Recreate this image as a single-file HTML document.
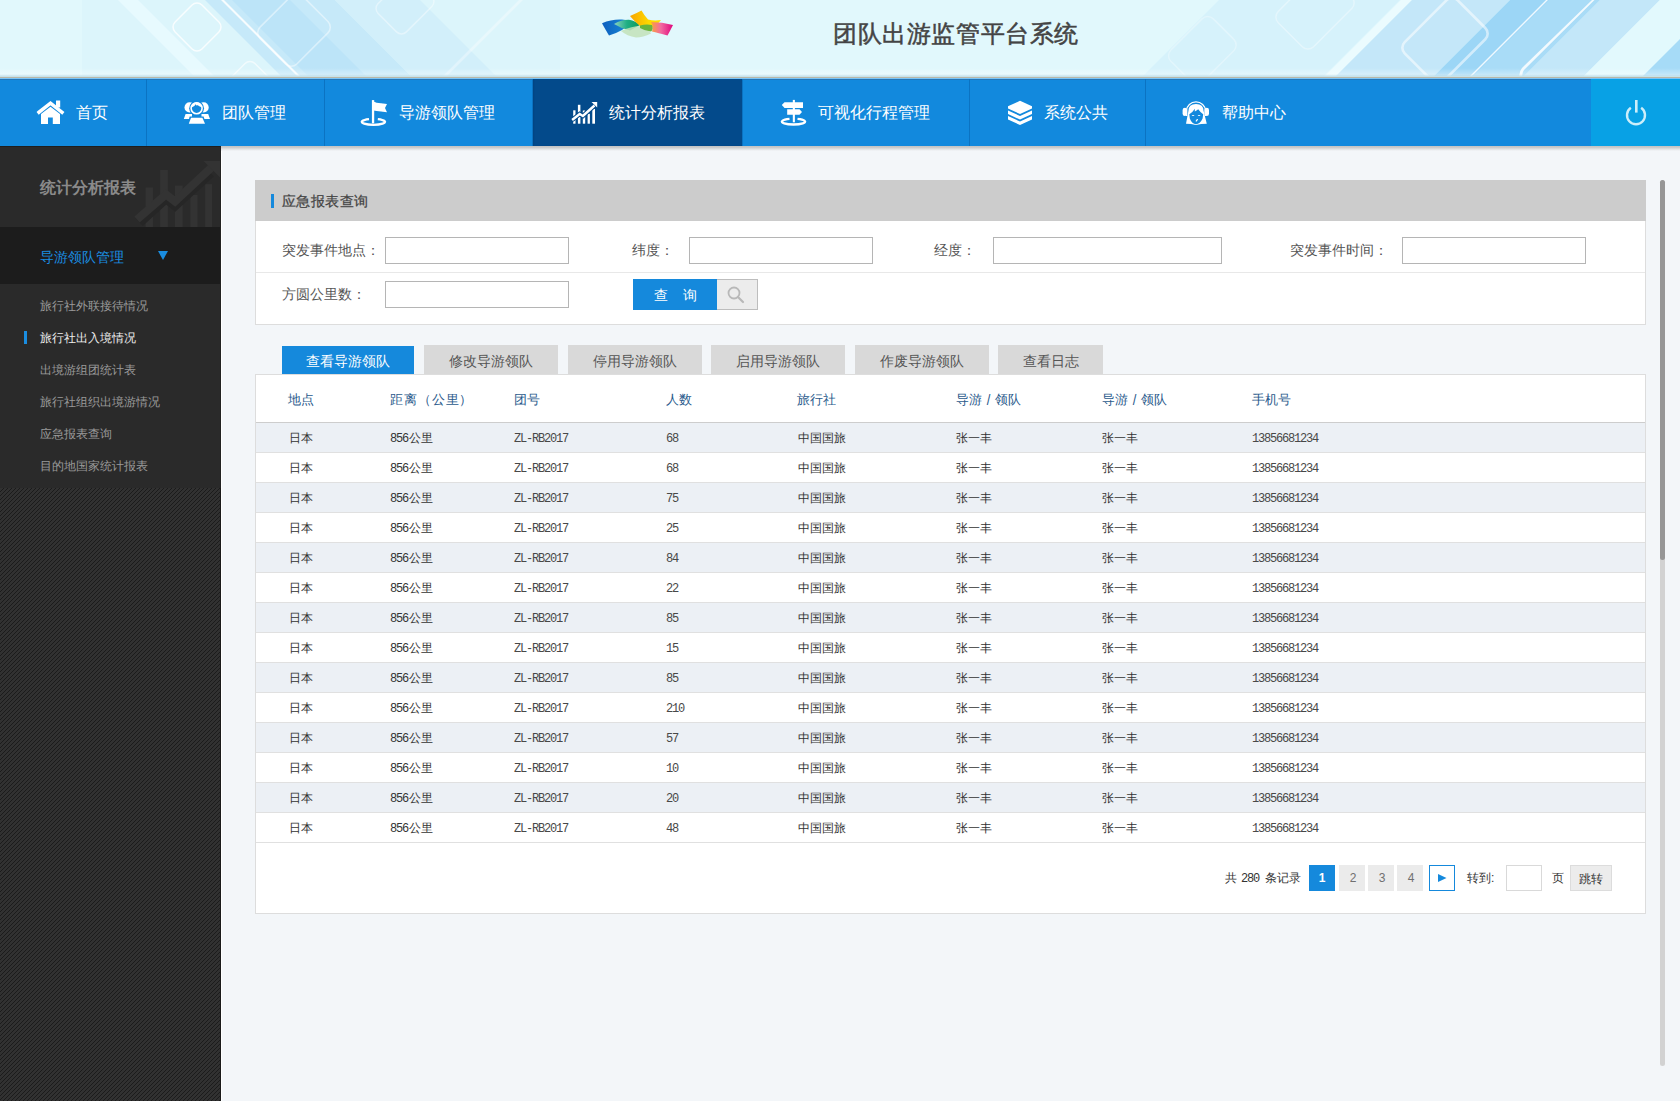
<!DOCTYPE html><html><head><meta charset="utf-8"><style>
*{margin:0;padding:0;box-sizing:border-box}
html,body{width:1680px;height:1101px;overflow:hidden;background:#f3f6f9;font-family:"Liberation Sans",sans-serif;color:#333}
#hdr{position:absolute;left:0;top:0;width:1680px;height:79px;background:#e0f8fc;overflow:hidden}
#title{position:absolute;left:833px;top:17px;font-size:24.4px;color:#444;line-height:34px;white-space:nowrap;-webkit-text-stroke:0.5px #444;letter-spacing:0.6px}
#nav{position:absolute;left:0;top:79px;width:1680px;height:67px;background:#1289dd;border-top:1px solid #2476b8}
.ni{position:absolute;top:-1px;height:67px;color:#fff;font-size:16px}
.ni .sep{position:absolute;left:0;top:0;width:1px;height:67px;background:#0b73c2}
.ni span{position:absolute;top:22px;line-height:24px;white-space:nowrap}
#navsvg{position:absolute;left:0;top:0}
#side{position:absolute;left:0;top:146px;width:221px;height:955px;background:#2a2a2a;overflow:hidden}
#side .t1{position:absolute;left:40px;top:31px;font-size:16px;font-weight:bold;color:#8a8a8a;line-height:22px;white-space:nowrap}
#side .sec{position:absolute;left:0;top:81px;width:221px;height:57px;background:#1c1c1c}
#side .sec span{position:absolute;left:40px;top:19px;font-size:14px;color:#1a8de0;line-height:22px;white-space:nowrap}
#side .it{position:absolute;left:40px;font-size:12px;color:#9a9a9a;line-height:18px;white-space:nowrap}
#side .it.on{color:#eeeeee}
#side .stripes{position:absolute;left:0;top:342px;width:221px;height:620px}
#content{position:absolute;left:221px;top:146px;width:1459px;height:955px;background:#f3f6f9;border-left:1px solid #fff}
.panel{position:absolute;left:255px;top:180px;width:1391px;height:145px;background:#fff;border:1px solid #dddddd;border-top:none}
.ph{position:absolute;left:255px;top:180px;width:1391px;height:41px;background:#cccccc}
.ph .bar{position:absolute;left:16px;top:14px;width:3px;height:14px;background:#1589dc}
.ph span{position:absolute;left:27px;top:10px;font-size:14px;color:#444;line-height:22px;-webkit-text-stroke:0.25px #444;letter-spacing:0.4px;white-space:nowrap}
.lbl{position:absolute;font-size:14px;color:#555;line-height:20px;white-space:nowrap}
.inp{position:absolute;height:27px;border:1px solid #b5b5b5;background:#fff}
.hline{position:absolute;left:256px;top:272px;width:1389px;height:1px;background:#e8e8e8}
.btn{position:absolute;left:633px;top:279px;width:125px;height:31px;border:1px solid #bdbdbd;background:#ececec}
.btn .b{position:absolute;left:-1px;top:-1px;width:84px;height:31px;background:#1589dc;color:#fff;font-size:14px;line-height:29px;text-align:center;letter-spacing:0}
.tab{position:absolute;top:345px;width:134px;height:29px;background:#d9d9d9;color:#555;font-size:14px;line-height:32px;text-align:center;white-space:nowrap}
.tab.on{top:346px;height:28px;width:132px;background:#1589dc;color:#fff;line-height:30px}
.tbl{position:absolute;left:255px;top:374px;width:1391px;height:540px;background:#fff;border:1px solid #dddddd}
.th{position:absolute;top:391px;font-size:13px;color:#2a5a8c;line-height:18px;white-space:nowrap}
.row{position:absolute;left:256px;width:1389px;height:30px;border-bottom:1px solid #e0e0e0}
.row.odd{background:#ecf0f5}
.row div{position:absolute;top:7px;font-size:12px;line-height:16px;color:#333;white-space:nowrap}
.row .m{top:8px;font-family:"Liberation Mono",monospace;font-size:12px;letter-spacing:-1.2px;color:#484848}
.pg{position:absolute;top:865px;height:26px;font-size:12px;line-height:26px;text-align:center}
</style></head><body><div id="hdr"><svg width="1680" height="79" viewBox="0 0 1680 79" style="position:absolute;left:0;top:0"><rect width="1680" height="79" fill="#e1f8fc"/><path d="M82 0 L560 0 L560 79 L82 79 Z" fill="#dcf5fb"/><path d="M118 0 L138 0 L217 79 L197 79 Z" fill="#e8fbfe" opacity="0.9"/><path d="M205 0 L335 0 L414 79 L284 79 Z" fill="#c6e9f9"/><path d="M232 0 L290 0 L369 79 L311 79 Z" fill="#bce4f8"/><path d="M335 0 L420 0 L499 79 L414 79 Z" fill="#d2effa"/><path d="M221 0 L224 0 L303 79 L300 79 Z" fill="#ffffff" opacity="0.85"/><rect x="178" y="8" width="38" height="38" rx="7" transform="rotate(45 197 27)" fill="none" stroke="#fff" stroke-width="1.5" opacity="0.8"/><rect x="268" y="0" width="52" height="60" rx="8" transform="rotate(45 294 30)" fill="none" stroke="#fff" stroke-width="1.6" opacity="0.45"/><rect x="232" y="66" width="36" height="36" rx="7" transform="rotate(45 250 84)" fill="none" stroke="#fff" stroke-width="1.6" opacity="0.6"/><rect x="385" y="-20" width="40" height="50" rx="7" transform="rotate(45 405 5)" fill="none" stroke="#fff" stroke-width="1.5" opacity="0.4"/><path d="M440 79 L519 0 L523 0 L444 79 Z" fill="#fff" opacity="0.35"/><path d="M1140 79 L1219 0 L1400 0 L1321 79 Z" fill="#d6f2fb"/><path d="M1322 79 L1401 0 L1412 0 L1333 79 Z" fill="#ecfbfe" opacity="0.9"/><path d="M1333 79 L1412 0 L1510 0 L1431 79 Z" fill="#c4e7f9"/><path d="M1431 79 L1510 0 L1600 0 L1521 79 Z" fill="#9cd6f6"/><path d="M1470 79 L1549 0 L1600 0 L1521 79 Z" fill="#a9dcf7"/><path d="M1521 79 L1600 0 L1660 0 L1581 79 Z" fill="#c3e7f9"/><path d="M1581 79 L1660 0 L1680 0 L1680 79 Z" fill="#e2f9fd"/><path d="M1640 79 L1680 39 L1680 79 Z" fill="#a6dbf7"/><path d="M1467 79 L1546 0 L1548 0 L1469 79 Z" fill="#fff" opacity="0.85"/><path d="M1592 0 L1594.5 0 L1524 70 Q1521 74 1523 79 L1520 79 Q1518 73 1522 68 Z" fill="#fff" opacity="0.85"/><rect x="1418" y="3" width="55" height="75" rx="8" transform="rotate(45 1445 40)" fill="none" stroke="#fff" stroke-width="2.6" opacity="0.55"/><rect x="1290" y="-25" width="50" height="70" rx="8" transform="rotate(45 1315 10)" fill="none" stroke="#fff" stroke-width="1.5" opacity="0.35"/><rect x="1180" y="20" width="45" height="60" rx="8" transform="rotate(45 1202 50)" fill="none" stroke="#fff" stroke-width="1.5" opacity="0.3"/><defs><linearGradient id="hb" x1="0" y1="0" x2="0" y2="1"><stop offset="0" stop-color="#fff" stop-opacity="0"/><stop offset="0.7" stop-color="#fff" stop-opacity="0.28"/><stop offset="1" stop-color="#c0dfea" stop-opacity="0.8"/></linearGradient></defs><rect x="0" y="68" width="1680" height="8" fill="url(#hb)"/><rect x="0" y="76" width="1680" height="1" fill="#c9e3ea"/><rect x="0" y="77" width="1680" height="1" fill="#b9b7a8"/><rect x="0" y="78" width="1680" height="1" fill="#7cc4f4"/><defs><linearGradient id="lgb" x1="0" y1="0" x2="1" y2="0"><stop offset="0" stop-color="#0d5fbf"/><stop offset="1" stop-color="#1a8fd8"/></linearGradient><linearGradient id="lgg" x1="0" y1="0" x2="1" y2="0"><stop offset="0" stop-color="#8fd3c0"/><stop offset="0.5" stop-color="#1fae84"/><stop offset="1" stop-color="#0e9a5a"/></linearGradient><linearGradient id="lgy" x1="0" y1="0" x2="1" y2="0"><stop offset="0" stop-color="#f7a500"/><stop offset="0.6" stop-color="#ffd800"/><stop offset="1" stop-color="#fbe000"/></linearGradient><linearGradient id="lgp" x1="0" y1="0" x2="1" y2="0"><stop offset="0" stop-color="#f9a23a"/><stop offset="0.45" stop-color="#f26aa0"/><stop offset="1" stop-color="#e0067d"/></linearGradient></defs><path d="M602 23.3 Q612 19 622 19.6 Q628 20 632 22 L622 30 Q615 34 609 35.5 Q605 29 602 23.3 Z" fill="url(#lgb)"/><path d="M614 24 Q622 19.5 629 19.8 Q636 21 640 25 L630 30.5 Q622 29 614 24 Z" fill="url(#lgg)"/><path d="M621 31 Q632 26 641 26 Q648 28 651 33.5 Q643 37.5 636 37.5 Q627 36 621 31 Z" fill="#c2e2b8" opacity="0.85"/><path d="M630 16 Q637 13 641.5 10.5 Q644 15 648 19.5 Q654 21 661 20 L655 27 Q646 27.5 640 26 Q634 21 630 16 Z" fill="url(#lgy)"/><path d="M640 25.5 Q646 24 652 25 Q654 29 651 31.5 Q645 31 640 28 Z" fill="#6ab43c"/><path d="M651 22 Q662 22 673 25 Q670 31 667.5 35.5 Q658 33 652 31.5 Q654 27 651 22 Z" fill="url(#lgp)"/></svg><div id="title">团队出游监管平台系统</div></div><div id="nav"><div class="ni" style="left:0px;width:146px"><span style="left:76px">首页</span></div><div class="ni" style="left:146px;width:178px"><div class="sep"></div><span style="left:76px">团队管理</span></div><div class="ni" style="left:324px;width:208px"><div class="sep"></div><span style="left:75px">导游领队管理</span></div><div class="ni" style="left:532px;width:211px;background:#034a8b;box-shadow:inset 2px 0 2px -1px rgba(0,30,60,0.35)"><div class="sep"></div><span style="left:77px">统计分析报表</span></div><div class="ni" style="left:742px;width:227px"><div class="sep"></div><span style="left:76px">可视化行程管理</span></div><div class="ni" style="left:969px;width:176px"><div class="sep"></div><span style="left:75px">系统公共</span></div><div class="ni" style="left:1145px;width:446px"><div class="sep"></div><span style="left:77px">帮助中心</span></div><div class="ni" style="left:1591px;width:89px;background:#08a1e5"></div></div><svg id="navsvg" width="1680" height="146" viewBox="0 0 1680 146"><polyline points="39,112.2 50.5,103.2 62,112.2" fill="none" stroke="#fff" stroke-width="3.5" stroke-linecap="square"/><rect x="56" y="100.5" width="4.2" height="7" fill="#fff"/><path d="M41 114 L50.5 106.8 L60 114 V124 H52.8 V117.5 H48 V124 H41 Z" fill="#fff"/><circle cx="189.6" cy="107.4" r="5.1" fill="#fff"/><circle cx="203.6" cy="107.4" r="5.1" fill="#fff"/><path d="M183.8 119 L185.6 113.9 L192 113.9 L192 119 Z M201.5 113.9 L208.2 113.9 L210 119 L201.5 119 Z" fill="#fff"/><circle cx="196.6" cy="108.2" r="7.4" fill="#1289dd"/><circle cx="196.6" cy="108.2" r="5.5" fill="none" stroke="#fff" stroke-width="1.6"/><path d="M191.5 107.5 A5 5 0 0 1 201.6 107.2 Q199 106.5 197.5 105 Q196.8 106.5 195.6 104.2 Q194.5 107 191.5 107.5 Z" fill="#fff"/><path d="M189.6 116.6 L203.6 116.6 L206.2 124.6 L187.6 124.6 Z" fill="#1289dd"/><path d="M191 117.7 L202.4 117.7 L205 123.8 L188.8 123.8 Z" fill="#fff"/><path d="M369 119.1 A11.6 3 0 1 0 377.8 119.1" fill="none" stroke="#fff" stroke-width="2.4"/><rect x="371.9" y="100.1" width="2.3" height="23.3" fill="#fff"/><path d="M373.5 101.4 Q376 102.8 381 103.2 L387 103.9 L385 108 L387 112.3 L381 111.6 Q376 111.2 373.5 110.6 Z" fill="#fff"/><rect x="573.2" y="110.3" width="2.3" height="13.400000000000006" fill="#fff"/><rect x="577.9" y="104.8" width="2.5" height="18.900000000000006" fill="#fff"/><rect x="582.8" y="110.5" width="2.4" height="13.200000000000003" fill="#fff"/><rect x="587.6" y="113.8" width="2.3" height="9.900000000000006" fill="#fff"/><rect x="592.3" y="108.9" width="2.7" height="14.799999999999997" fill="#fff"/><polyline points="572.1,120 579.7,114 582.9,116 594.5,105.5" fill="none" stroke="#034a8b" stroke-width="4.6"/><polyline points="572.1,120 579.7,114 582.9,116 594.5,105.5" fill="none" stroke="#fff" stroke-width="2.4"/><path d="M591.5 102 L597.2 102 L597.2 107.5 Z" fill="#fff"/><path d="M789.5 118.9 A11.6 2.9 0 1 0 797.5 118.9" fill="none" stroke="#fff" stroke-width="2.4"/><rect x="792.8" y="99.9" width="2.1" height="22.4" fill="#fff"/><path d="M784.5 102.3 L803 102.3 L803 107.9 L784.5 107.9 L781.8 105.1 Z" fill="#fff"/><path d="M787.2 109.3 L799.5 109.3 L802 112 L799.5 114.7 L787.2 114.7 Z" fill="#fff"/><path d="M1020 100.8 L1032 106.3 L1032 108.5 L1020 114 L1008 108.5 L1008 106.3 Z" fill="#fff"/><path d="M1008 110.5 L1020 116 L1032 110.5 L1032 114 L1020 119.6 L1008 114 Z" fill="#fff"/><path d="M1008 116 L1020 121.5 L1032 116 L1032 119.5 L1020 125 L1008 119.5 Z" fill="#fff"/><path d="M1186.6 116 V110.5 A9.4 8.6 0 0 1 1205.4 110.5 V116" fill="none" stroke="#fff" stroke-width="1.3"/><rect x="1182.6" y="107.7" width="4.6" height="8.4" rx="2.3" fill="#fff"/><rect x="1204.4" y="107.7" width="4.6" height="8.4" rx="2.3" fill="#fff"/><path d="M1188.4 111 Q1188.4 104 1196 104 Q1203.6 104 1203.6 111 L1206.8 123.8 Q1201 123.8 1196 125 Q1191 123.8 1186 123.8 Z" fill="#fff"/><path d="M1189.3 114.2 Q1193 112 1194.8 108.8 L1194.8 111.5 Q1196.5 110.5 1198.2 109.2 Q1201 113 1203.2 114.2 L1202.6 118.5 Q1200 124.2 1196 124.2 Q1192 124.2 1189.8 118.5 Z" fill="#1289dd"/><path d="M1191.6 116 Q1193 114 1194.6 116 Z M1197.6 116 Q1199 114 1200.6 116 Z" fill="#fff"/><path d="M1196.3 121.5 Q1196.2 119.6 1198 119.6" fill="none" stroke="#fff" stroke-width="1.2"/><path d="M1630.84 107.83 A9 9 0 1 0 1641.16 107.83" fill="none" stroke="#cdeefa" stroke-width="2.4"/><rect x="1635" y="100" width="2.6" height="12.6" fill="#cdeefa"/></svg><div id="side"><svg width="221" height="81" style="position:absolute;left:0;top:0" viewBox="0 146 221 81"><g fill="#333"><rect x="145.6" y="187.4" width="7.3" height="40"/><rect x="160.2" y="170" width="7.6" height="57"/><rect x="175" y="185.6" width="7.7" height="42"/><rect x="190.3" y="195" width="7.3" height="32"/><rect x="205.2" y="184.2" width="6.9" height="43"/></g><polyline points="139,222 166,197.5 175,204.5 210,172.5" fill="none" stroke="#262626" stroke-width="11"/><polyline points="137,219.5 166,194.5 175,201.5 212,167" fill="none" stroke="#333" stroke-width="8"/><path d="M203.4 160.9 L220.1 160.9 L220.1 177.6 Z" fill="#333"/></svg><div class="t1">统计分析报表</div><div class="sec"><span>导游领队管理</span><svg width="11" height="10" style="position:absolute;left:158px;top:24px"><path d="M0 0 L10 0 L5 9 Z" fill="#1a8de0"/></svg></div><div class="it" style="top:151px">旅行社外联接待情况</div><div class="it on" style="top:183px">旅行社出入境情况</div><div class="it" style="top:215px">出境游组团统计表</div><div class="it" style="top:247px">旅行社组织出境游情况</div><div class="it" style="top:279px">应急报表查询</div><div class="it" style="top:311px">目的地国家统计报表</div><div style="position:absolute;left:24px;top:185px;width:3px;height:13px;background:#1a8de0"></div><svg class="stripes" width="221" height="620" shape-rendering="crispEdges"><defs><pattern id="st" width="4" height="4" patternUnits="userSpaceOnUse"><rect width="4" height="4" fill="#313131"/><rect x="3" y="0" width="1" height="1" fill="#1b1b1b"/><rect x="2" y="1" width="1" height="1" fill="#1b1b1b"/><rect x="1" y="2" width="1" height="1" fill="#1b1b1b"/><rect x="0" y="3" width="1" height="1" fill="#1b1b1b"/></pattern></defs><rect width="221" height="620" fill="url(#st)"/></svg><div style="position:absolute;left:220px;top:0;width:1px;height:342px;background:#222"></div><div style="position:absolute;left:220px;top:342px;width:1px;height:620px;background:#1a1a1a"></div><div style="position:absolute;left:0;top:0;width:221px;height:1px;background:#1e1e1e"></div></div><div style="position:absolute;left:221px;top:146px;width:1px;height:955px;background:#fff"></div><div style="position:absolute;left:221px;top:146px;width:1459px;height:5px;background:linear-gradient(#c2c2c2,#cbcccc 30%,#e2e4e5 65%,#f3f6f9)"></div><div class="panel"></div><div class="ph"><div class="bar"></div><span>应急报表查询</span></div><div class="hline"></div><div class="lbl" style="left:282px;top:240px">突发事件地点：</div><div class="lbl" style="left:632px;top:240px">纬度：</div><div class="lbl" style="left:934px;top:240px">经度：</div><div class="lbl" style="left:1290px;top:240px">突发事件时间：</div><div class="lbl" style="left:282px;top:284px">方圆公里数：</div><div class="inp" style="left:385px;top:237px;width:184px"></div><div class="inp" style="left:689px;top:237px;width:184px"></div><div class="inp" style="left:993px;top:237px;width:229px"></div><div class="inp" style="left:1402px;top:237px;width:184px"></div><div class="inp" style="left:385px;top:281px;width:184px"></div><div class="btn"><div class="b" style="padding-top:2px;padding-left:2px;letter-spacing:1px">查&nbsp;&nbsp;&nbsp;询</div><svg width="20" height="20" style="position:absolute;left:92px;top:5px"><circle cx="8" cy="8" r="5.5" fill="none" stroke="#b8b8b8" stroke-width="1.8"/><path d="M12 12 L17 17" stroke="#b8b8b8" stroke-width="2.2" stroke-linecap="round"/></svg></div><div class="tbl"></div><div class="tab on" style="left:282px">查看导游领队</div><div class="tab" style="left:424px;width:134px">修改导游领队</div><div class="tab" style="left:568px;width:134px">停用导游领队</div><div class="tab" style="left:711px;width:134px">启用导游领队</div><div class="tab" style="left:855px;width:134px">作废导游领队</div><div class="tab" style="left:998px;width:105px">查看日志</div><div class="th" style="left:288px">地点</div><div class="th" style="left:390px"><span style="letter-spacing:0.9px">距离（公里）</span></div><div class="th" style="left:514px">团号</div><div class="th" style="left:666px">人数</div><div class="th" style="left:797px">旅行社</div><div class="th" style="left:956px">导游&nbsp;<span style="display:inline-block;transform:scaleY(1.15);margin:0 1px">/</span>&nbsp;领队</div><div class="th" style="left:1102px">导游&nbsp;<span style="display:inline-block;transform:scaleY(1.15);margin:0 1px">/</span>&nbsp;领队</div><div class="th" style="left:1252px">手机号</div><div style="position:absolute;left:256px;top:422px;width:1389px;height:1px;background:#cdcdcd"></div><div class="row odd" style="top:423px"><div style="left:33px">日本</div><div style="left:134px"><span class="m2" style="font-family:'Liberation Mono',monospace;font-size:12px;letter-spacing:-1.2px;margin-right:1px">856</span>公里</div><div class="m" style="left:258px">ZL-RB2017</div><div class="m" style="left:410px">68</div><div style="left:542px">中国国旅</div><div style="left:700px">张一丰</div><div style="left:846px">张一丰</div><div class="m" style="left:996px">13856681234</div></div><div class="row" style="top:453px"><div style="left:33px">日本</div><div style="left:134px"><span class="m2" style="font-family:'Liberation Mono',monospace;font-size:12px;letter-spacing:-1.2px;margin-right:1px">856</span>公里</div><div class="m" style="left:258px">ZL-RB2017</div><div class="m" style="left:410px">68</div><div style="left:542px">中国国旅</div><div style="left:700px">张一丰</div><div style="left:846px">张一丰</div><div class="m" style="left:996px">13856681234</div></div><div class="row odd" style="top:483px"><div style="left:33px">日本</div><div style="left:134px"><span class="m2" style="font-family:'Liberation Mono',monospace;font-size:12px;letter-spacing:-1.2px;margin-right:1px">856</span>公里</div><div class="m" style="left:258px">ZL-RB2017</div><div class="m" style="left:410px">75</div><div style="left:542px">中国国旅</div><div style="left:700px">张一丰</div><div style="left:846px">张一丰</div><div class="m" style="left:996px">13856681234</div></div><div class="row" style="top:513px"><div style="left:33px">日本</div><div style="left:134px"><span class="m2" style="font-family:'Liberation Mono',monospace;font-size:12px;letter-spacing:-1.2px;margin-right:1px">856</span>公里</div><div class="m" style="left:258px">ZL-RB2017</div><div class="m" style="left:410px">25</div><div style="left:542px">中国国旅</div><div style="left:700px">张一丰</div><div style="left:846px">张一丰</div><div class="m" style="left:996px">13856681234</div></div><div class="row odd" style="top:543px"><div style="left:33px">日本</div><div style="left:134px"><span class="m2" style="font-family:'Liberation Mono',monospace;font-size:12px;letter-spacing:-1.2px;margin-right:1px">856</span>公里</div><div class="m" style="left:258px">ZL-RB2017</div><div class="m" style="left:410px">84</div><div style="left:542px">中国国旅</div><div style="left:700px">张一丰</div><div style="left:846px">张一丰</div><div class="m" style="left:996px">13856681234</div></div><div class="row" style="top:573px"><div style="left:33px">日本</div><div style="left:134px"><span class="m2" style="font-family:'Liberation Mono',monospace;font-size:12px;letter-spacing:-1.2px;margin-right:1px">856</span>公里</div><div class="m" style="left:258px">ZL-RB2017</div><div class="m" style="left:410px">22</div><div style="left:542px">中国国旅</div><div style="left:700px">张一丰</div><div style="left:846px">张一丰</div><div class="m" style="left:996px">13856681234</div></div><div class="row odd" style="top:603px"><div style="left:33px">日本</div><div style="left:134px"><span class="m2" style="font-family:'Liberation Mono',monospace;font-size:12px;letter-spacing:-1.2px;margin-right:1px">856</span>公里</div><div class="m" style="left:258px">ZL-RB2017</div><div class="m" style="left:410px">85</div><div style="left:542px">中国国旅</div><div style="left:700px">张一丰</div><div style="left:846px">张一丰</div><div class="m" style="left:996px">13856681234</div></div><div class="row" style="top:633px"><div style="left:33px">日本</div><div style="left:134px"><span class="m2" style="font-family:'Liberation Mono',monospace;font-size:12px;letter-spacing:-1.2px;margin-right:1px">856</span>公里</div><div class="m" style="left:258px">ZL-RB2017</div><div class="m" style="left:410px">15</div><div style="left:542px">中国国旅</div><div style="left:700px">张一丰</div><div style="left:846px">张一丰</div><div class="m" style="left:996px">13856681234</div></div><div class="row odd" style="top:663px"><div style="left:33px">日本</div><div style="left:134px"><span class="m2" style="font-family:'Liberation Mono',monospace;font-size:12px;letter-spacing:-1.2px;margin-right:1px">856</span>公里</div><div class="m" style="left:258px">ZL-RB2017</div><div class="m" style="left:410px">85</div><div style="left:542px">中国国旅</div><div style="left:700px">张一丰</div><div style="left:846px">张一丰</div><div class="m" style="left:996px">13856681234</div></div><div class="row" style="top:693px"><div style="left:33px">日本</div><div style="left:134px"><span class="m2" style="font-family:'Liberation Mono',monospace;font-size:12px;letter-spacing:-1.2px;margin-right:1px">856</span>公里</div><div class="m" style="left:258px">ZL-RB2017</div><div class="m" style="left:410px">210</div><div style="left:542px">中国国旅</div><div style="left:700px">张一丰</div><div style="left:846px">张一丰</div><div class="m" style="left:996px">13856681234</div></div><div class="row odd" style="top:723px"><div style="left:33px">日本</div><div style="left:134px"><span class="m2" style="font-family:'Liberation Mono',monospace;font-size:12px;letter-spacing:-1.2px;margin-right:1px">856</span>公里</div><div class="m" style="left:258px">ZL-RB2017</div><div class="m" style="left:410px">57</div><div style="left:542px">中国国旅</div><div style="left:700px">张一丰</div><div style="left:846px">张一丰</div><div class="m" style="left:996px">13856681234</div></div><div class="row" style="top:753px"><div style="left:33px">日本</div><div style="left:134px"><span class="m2" style="font-family:'Liberation Mono',monospace;font-size:12px;letter-spacing:-1.2px;margin-right:1px">856</span>公里</div><div class="m" style="left:258px">ZL-RB2017</div><div class="m" style="left:410px">10</div><div style="left:542px">中国国旅</div><div style="left:700px">张一丰</div><div style="left:846px">张一丰</div><div class="m" style="left:996px">13856681234</div></div><div class="row odd" style="top:783px"><div style="left:33px">日本</div><div style="left:134px"><span class="m2" style="font-family:'Liberation Mono',monospace;font-size:12px;letter-spacing:-1.2px;margin-right:1px">856</span>公里</div><div class="m" style="left:258px">ZL-RB2017</div><div class="m" style="left:410px">20</div><div style="left:542px">中国国旅</div><div style="left:700px">张一丰</div><div style="left:846px">张一丰</div><div class="m" style="left:996px">13856681234</div></div><div class="row" style="top:813px"><div style="left:33px">日本</div><div style="left:134px"><span class="m2" style="font-family:'Liberation Mono',monospace;font-size:12px;letter-spacing:-1.2px;margin-right:1px">856</span>公里</div><div class="m" style="left:258px">ZL-RB2017</div><div class="m" style="left:410px">48</div><div style="left:542px">中国国旅</div><div style="left:700px">张一丰</div><div style="left:846px">张一丰</div><div class="m" style="left:996px">13856681234</div></div><div class="pg" style="left:1224px;width:14px;color:#333">共</div><div class="pg" style="left:1241px;width:20px;text-align:left;color:#333;font-family:Liberation Mono,monospace;font-size:12px;letter-spacing:-1.2px;line-height:29px">280</div><div class="pg" style="left:1265px;width:40px;text-align:left;color:#333;white-space:nowrap">条记录</div><div class="pg" style="left:1309px;width:26px;background:#1589dc;color:#fff;font-weight:bold">1</div><div class="pg" style="left:1339px;width:26px;background:#ebebeb;color:#707070;line-height:27px;padding-left:2px">2</div><div class="pg" style="left:1368px;width:26px;background:#ebebeb;color:#707070;line-height:27px;padding-left:2px">3</div><div class="pg" style="left:1397px;width:26px;background:#ebebeb;color:#707070;line-height:27px;padding-left:2px">4</div><div class="pg" style="left:1429px;width:26px;border:1px solid #1589dc;background:#fff"><svg width="10" height="10" style="position:absolute;left:8px;top:8px"><path d="M0 0 L8.5 4 L0 8 Z" fill="#1589dc"/></svg></div><div class="pg" style="left:1467px;width:32px;text-align:left;color:#333">转到:</div><div class="pg" style="left:1506px;width:36px;border:1px solid #d9d9d9;background:#fff"></div><div class="pg" style="left:1551px;width:14px;color:#333">页</div><div class="pg" style="left:1570px;width:42px;border:1px solid #dcdcdc;background:#ececec;color:#333">跳转</div><div style="position:absolute;left:1660px;top:180px;width:5px;height:886px;background:#d2d2d2;border-radius:3px"></div><div style="position:absolute;left:1660px;top:180px;width:5px;height:380px;background:#969696;border-radius:3px"></div></body></html>
